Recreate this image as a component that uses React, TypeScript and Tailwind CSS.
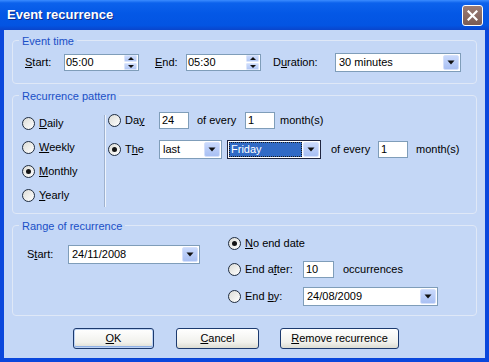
import React from "react";

function U({ children }: { children: React.ReactNode }) {
  return <span className="underline decoration-1 underline-offset-[1px]">{children}</span>;
}

function Radio({ checked }: { checked?: boolean }) {
  return (
    <span className="w-[13px] h-[13px] rounded-full border border-[#1f2c3f] bg-[linear-gradient(135deg,#dcdcd6,#ffffff)] flex items-center justify-center shrink-0">
      {checked && <span className="w-[5px] h-[5px] rounded-full bg-[#141414]" />}
    </span>
  );
}

function DownArrow() {
  return (
    <svg width="8" height="5" viewBox="0 0 8 5">
      <path d="M0.5 0.5 H7.5 L4 4.5 Z" fill="#111" />
    </svg>
  );
}

function ArrowBtn() {
  return (
    <span className="w-[16px] h-full rounded-[2px] border border-[#d4e0fb] bg-[linear-gradient(180deg,#c9d9fc,#a9c0f3)] flex items-center justify-center shrink-0">
      <DownArrow />
    </span>
  );
}

function SpinBtn({ up }: { up?: boolean }) {
  return (
    <span className="w-[13px] flex-1 rounded-[1px] border border-[#dbe5fb] bg-[linear-gradient(180deg,#cddcfc,#b3c8f5)] flex items-center justify-center">
      <svg width="6" height="3" viewBox="0 0 6 3">
        {up ? <path d="M0 3 H6 L3 0 Z" fill="#111" /> : <path d="M0 0 H6 L3 3 Z" fill="#111" />}
      </svg>
    </span>
  );
}

function Spin({ value }: { value: string }) {
  return (
    <div className="w-[75px] h-[17px] border border-[#7f9db9] bg-white flex items-stretch">
      <span className="flex-1 pl-[1px] flex items-center">{value}</span>
      <div className="flex flex-col gap-[1px] pr-[1px] py-[0px]">
        <SpinBtn up />
        <SpinBtn />
      </div>
    </div>
  );
}

function Combo({ value, className }: { value: string; className: string }) {
  return (
    <div className={"h-[19px] border border-[#7f9db9] bg-white flex items-stretch p-[1px] " + className}>
      <span className="flex-1 pl-[2px] flex items-center">{value}</span>
      <ArrowBtn />
    </div>
  );
}

function Box({ value, className }: { value: string; className: string }) {
  return (
    <div className={"h-[17px] border border-[#7f9db9] bg-white flex items-center pl-[2px] " + className}>
      {value}
    </div>
  );
}

function Group({ title, className, children }: { title: string; className: string; children: React.ReactNode }) {
  return (
    <fieldset className={"border border-[#dfe8f7] rounded-[4px] " + className}>
      <legend className="ml-[6px] px-[3px] pt-[3px] leading-[13px] text-[#1a4fc6]">{title}</legend>
      {children}
    </fieldset>
  );
}

function Button({ children, def }: { children: React.ReactNode; def?: boolean }) {
  return (
    <div
      className={
        "h-[21px] rounded-[3px] border border-[#1c3a6e] bg-[linear-gradient(180deg,#ffffff,#f1f1ec_70%,#dcdcd2)] flex items-center justify-center " +
        (def ? "shadow-[inset_0_0_0_1px_#bcd2f4,inset_0_-1px_0_1px_#8fb0e6]" : "")
      }
    >
      {children}
    </div>
  );
}

export default function App() {
  return (
    <div className="w-[489px] h-[362px] bg-[#0a47dc] flex flex-col font-['Liberation_Sans',Arial,sans-serif] text-[11px] text-black select-none">
      <div className="h-[30px] shrink-0 bg-[linear-gradient(180deg,#3b8cff_0%,#0c62ec_10%,#0458e6_45%,#0354e2_85%,#0a45cc_100%)] flex items-center justify-between pl-[7px] pr-[6px]">
        <span className="text-white font-bold text-[13px] [text-shadow:1px_1px_0_#0b2a8a]">Event recurrence</span>
        <span className="w-[21px] h-[21px] rounded-[3px] border border-white bg-[linear-gradient(180deg,#9b7c74,#7a5c55)] flex items-center justify-center">
          <svg width="11" height="11" viewBox="0 0 11 11">
            <path d="M1.5 1.5 L9.5 9.5 M9.5 1.5 L1.5 9.5" stroke="#fff" strokeWidth="2.2" strokeLinecap="square" />
          </svg>
        </span>
      </div>

      <div className="flex-1 mx-[4px] mb-[4px] bg-[#c4d7f6] flex flex-col px-[8px]">
        <Group title="Event time" className="mt-[2px]">
          <div className="flex items-center pt-[5px] pb-[11px] pl-[12px]">
            <span className="w-[39px]"><U>S</U>tart:</span>
            <Spin value="05:00" />
            <span className="ml-[16px] w-[31px]"><U>E</U>nd:</span>
            <Spin value="05:30" />
            <span className="ml-[12px] w-[62px]">D<U>u</U>ration:</span>
            <Combo value="30 minutes" className="w-[126px]" />
          </div>
        </Group>

        <Group title="Recurrence pattern" className="mt-[3px]">
          <div className="flex pt-[8px] pb-[6px] pl-[9px]">
            <div className="w-[82px] flex flex-col">
              {[
                ["", "D", "aily", false],
                ["", "W", "eekly", false],
                ["", "M", "onthly", true],
                ["", "Y", "early", false],
              ].map(([a, u, b, c], i) => (
                <div key={i} className="h-[24px] flex items-center gap-[4px]">
                  <Radio checked={c as boolean} />
                  <span>
                    {a as string}
                    <U>{u as string}</U>
                    {b as string}
                  </span>
                </div>
              ))}
            </div>
            <div className="mt-[4px] w-[2px] border-l border-[#9fb2cf] border-r border-r-[#eef3fc]" />
            <div className="ml-[2px] flex flex-col pt-[1px]">
              <div className="h-[17px] flex items-center">
                <div className="w-[51px] flex items-center gap-[4px]">
                  <Radio />
                  <span>
                    Da<U>y</U>
                  </span>
                </div>
                <Box value="24" className="w-[30px]" />
                <span className="ml-[8px] w-[48px]">of every</span>
                <Box value="1" className="w-[30px]" />
                <span className="ml-[5px]">month(s)</span>
              </div>
              <div className="h-[19px] mt-[11px] flex items-center">
                <div className="w-[51px] flex items-center gap-[4px]">
                  <Radio checked />
                  <span>
                    T<U>h</U>e
                  </span>
                </div>
                <Combo value="last" className="w-[63px]" />
                <div className="ml-[5px] w-[94px] h-[19px] border border-[#202640] bg-white flex items-stretch p-[1px]">
                  <span className="flex-1 mr-[1px] bg-[#316ac5] text-white pl-[2px] flex items-center outline-1 outline-dotted outline-[#1a1a1a] -outline-offset-1">
                    Friday
                  </span>
                  <ArrowBtn />
                </div>
                <span className="ml-[10px] w-[47px]">of every</span>
                <Box value="1" className="w-[30px]" />
                <span className="ml-[8px]">month(s)</span>
              </div>
            </div>
          </div>
        </Group>

        <Group title="Range of recurrence" className="mt-[3px]">
          <div className="flex pb-[9px] pl-[14px]">
            <div className="pt-[12px] flex items-start">
              <div className="h-[19px] flex items-center">
                <span className="w-[41px]">
                  S<U>t</U>art:
                </span>
                <Combo value="24/11/2008" className="w-[132px]" />
              </div>
            </div>
            <div className="ml-[28px] flex flex-col pt-[1px]">
              <div className="h-[19px] flex items-center gap-[4px]">
                <Radio checked />
                <span>
                  <U>N</U>o end date
                </span>
              </div>
              <div className="h-[19px] mt-[7px] flex items-center">
                <div className="w-[75px] flex items-center gap-[4px]">
                  <Radio />
                  <span>
                    End a<U>f</U>ter:
                  </span>
                </div>
                <Box value="10" className="w-[31px]" />
                <span className="ml-[9px]">occurrences</span>
              </div>
              <div className="h-[19px] mt-[8px] flex items-center">
                <div className="w-[75px] flex items-center gap-[4px]">
                  <Radio />
                  <span>
                    End <U>b</U>y:
                  </span>
                </div>
                <Combo value="24/08/2009" className="w-[135px]" />
              </div>
            </div>
          </div>
        </Group>

        <div className="mt-[12px] flex pl-[61px]">
          <div className="w-[81px]">
            <Button def>
              <U>O</U>K
            </Button>
          </div>
          <div className="w-[83px] ml-[22px]">
            <Button>
              <U>C</U>ancel
            </Button>
          </div>
          <div className="w-[119px] ml-[21px]">
            <Button>
              <U>R</U>emove recurrence
            </Button>
          </div>
        </div>
      </div>
    </div>
  );
}
